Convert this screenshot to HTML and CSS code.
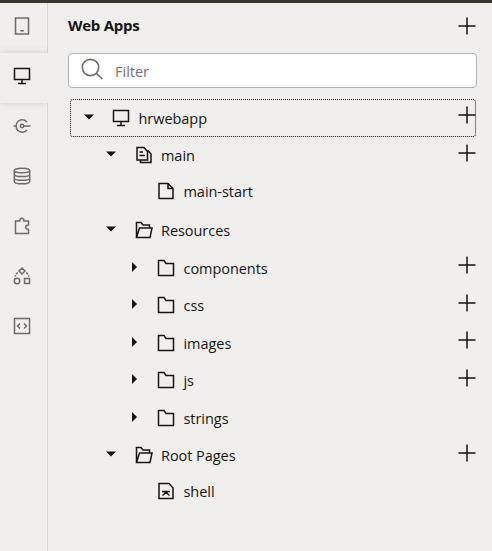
FILE: index.html
```html
<!DOCTYPE html>
<html lang="en">
<head>
<meta charset="utf-8">
<title>Web Apps</title>
<link rel="stylesheet" href="styles.css">
</head>
<body>
<svg class="defs" aria-hidden="true">
  <symbol id="monitor" viewBox="0 0 18 18"><path d="M1.5 1.5h15v11h-15zM9 12.500v4M5 16.500h8"/></symbol>
  <symbol id="folder" viewBox="0 0 18 18"><path d="M1.500 16.500v-15h5.500l2 3h7.500v12z"/></symbol>
  <symbol id="open" viewBox="0 0 18 18"><path d="M1.500 16.500v-15h4.500l2 2.500h6.500v3M1.500 16.500l3-9.500h12.500l-2 9.500z"/></symbol>
  <symbol id="page" viewBox="0 0 18 18"><path d="M2 1.500h9l5 5v10H2zM11 1.500v5h5"/></symbol>
  <symbol id="shell" viewBox="0 0 18 18"><path d="M2 1.500h10l4 4.500v10.500H2zM5 9.500h8M5.500 13.500l3.500-3 3.500 3M7 9.500l2 1.500 2-1.500"/></symbol>
  <symbol id="flow" viewBox="0 0 18 18"><path d="M2 1.500h7l3.500 4v8.500H2zM13 4.500l3 3.500v8.500H5.500V14M4.500 6h3.500M4.500 9.500h5.500"/></symbol>
  <symbol id="plus" viewBox="0 0 18 18"><path d="M9 .5v17M.5 9h17"/></symbol>
  <symbol id="down" viewBox="0 0 12 12"><path d="M1 3.500h10L6 8.500z"/></symbol>
  <symbol id="right" viewBox="0 0 12 12"><path d="M4 1v10l5-5z"/></symbol>
</svg>
<div class="topbar"></div>
<div class="app">
  <nav class="rail">
    <a class="tab"><svg viewBox="0 0 18 18"><path d="M2.500 1h13v16h-13zM7.300 13.700h3.500"/></svg></a>
    <a class="tab active"><svg><use href="#monitor"/></svg></a>
    <a class="tab"><svg viewBox="0 0 18 18"><path d="M14 5a6.200 6.200 0 1 0 0 8M.5 9H3M11 9h6.500"/><circle cx="9" cy="9" r="1.700"/></svg></a>
    <a class="tab"><svg viewBox="0 0 18 18"><ellipse cx="9" cy="3.500" rx="7.700" ry="2.300"/><path d="M1.300 3.500v11c0 3.100 15.400 3.100 15.400 0v-11M1.300 7.200c0 3.100 15.400 3.100 15.400 0M1.300 10.900c0 3.100 15.400 3.100 15.400 0"/></svg></a>
    <a class="tab"><svg viewBox="0 0 18 18"><path d="M2.500 4h4.200c-.3-3.700 4.600-3.700 4.300 0h4.500v4c-3.800-.3-3.800 4.600 0 4.300v4.200h-13z"/></svg></a>
    <a class="tab"><svg viewBox="0 0 18 18"><path d="M9 1l3 3-3 3-3-3zM11.500 11.500h5v5h-5zM4.700 5.500L3 7.200M2.500 8.200L2 9.500M13.300 5.500L15 7.200M15.500 8.200l.5 1.300"/><circle cx="4" cy="14" r="2.700"/></svg></a>
    <a class="tab"><svg viewBox="0 0 18 18"><path d="M1.500 1.500h15v15h-15zM7 6.500L4.500 9 7 11.500M11 6.500l2.500 2.500-2.500 2.500"/></svg></a>
  </nav>
  <main class="panel">
    <header class="heading"><h1>Web Apps</h1><svg class="plus"><use href="#plus"/></svg></header>
    <label class="filter"><svg viewBox="0 0 22 22"><circle cx="9.500" cy="9.500" r="8.200"/><path d="M15.300 15.300l6 5.700"/></svg><span>Filter</span></label>
    <div class="tree">
      <div class="row focused"><svg class="caret"><use href="#down"/></svg><svg class="icon"><use href="#monitor"/></svg><span>hrwebapp</span><svg class="plus"><use href="#plus"/></svg></div>
      <div class="row l1"><svg class="caret"><use href="#down"/></svg><svg class="icon"><use href="#flow"/></svg><span>main</span><svg class="plus"><use href="#plus"/></svg></div>
      <div class="row l2 leaf"><i class="caret"></i><svg class="icon"><use href="#page"/></svg><span>main-start</span></div>
      <div class="row l1"><svg class="caret"><use href="#down"/></svg><svg class="icon"><use href="#open"/></svg><span>Resources</span></div>
      <div class="row l2"><svg class="caret"><use href="#right"/></svg><svg class="icon"><use href="#folder"/></svg><span>components</span><svg class="plus"><use href="#plus"/></svg></div>
      <div class="row l2"><svg class="caret"><use href="#right"/></svg><svg class="icon"><use href="#folder"/></svg><span>css</span><svg class="plus"><use href="#plus"/></svg></div>
      <div class="row l2"><svg class="caret"><use href="#right"/></svg><svg class="icon"><use href="#folder"/></svg><span>images</span><svg class="plus"><use href="#plus"/></svg></div>
      <div class="row l2"><svg class="caret"><use href="#right"/></svg><svg class="icon"><use href="#folder"/></svg><span>js</span><svg class="plus"><use href="#plus"/></svg></div>
      <div class="row l2"><svg class="caret"><use href="#right"/></svg><svg class="icon"><use href="#folder"/></svg><span>strings</span></div>
      <div class="row l1"><svg class="caret"><use href="#down"/></svg><svg class="icon"><use href="#open"/></svg><span>Root Pages</span><svg class="plus"><use href="#plus"/></svg></div>
      <div class="row l2 leaf"><i class="caret"></i><svg class="icon"><use href="#shell"/></svg><span>shell</span></div>
    </div>
  </main>
</div>
</body>
</html>
```
FILE: styles.css
```css
* { box-sizing: border-box; }
body {
  margin: 0;
  height: 551px;
  overflow: hidden;
  background: #f0efed;
  color: #161513;
  font: 14.5px/20px "Open Sans", "Noto Sans", sans-serif;
}
svg { display: block; flex: none; width: 18px; height: 18px; fill: none; stroke: #161513; stroke-width: 1.5; }
svg.defs { display: none; }
.topbar { height: 3px; background: #3a3632; }
.app { display: flex; height: 548px; }
.rail { width: 48px; flex: none; border-right: 1px solid #d9d8d6; }
.tab { display: flex; width: 47px; height: 50px; padding: 0 3px 4px 0; align-items: center; justify-content: center; }
.tab:first-child { height: 47px; margin-bottom: 3px; padding-bottom: 1px; }
.tab svg { stroke: #6f6b66; }
.tab.active { width: 48px; padding-right: 4px; background: #f0efed; box-shadow: 0 0 8px rgba(0, 0, 0, .14); clip-path: inset(-8px 0 -8px 0); }
.tab.active svg { stroke: #161513; }
.panel { flex: 1; padding: 0 15px 0 20px; }
.heading { display: flex; height: 50px; padding: 0 1px 4px 0; align-items: center; justify-content: space-between; }
.heading h1 { margin: -2px 0 0; font-size: 15px; font-weight: 700; letter-spacing: -.25px; }
.plus { stroke-width: 1.5; }
.filter { display: flex; height: 35px; padding-left: 12px; align-items: center; gap: 12px; border: 1px solid #b5b4b2; border-radius: 4px; background: #fff; color: #77736e; }
.filter svg { width: 22px; height: 22px; stroke: #77736e; stroke-width: 1.7; margin-top: -3px; }
.filter span { margin-top: 2px; }
.tree { padding: 11px 1px 0 2px; }
.row { display: flex; height: 37.5px; padding-left: 11.5px; align-items: center; border: 1px solid transparent; letter-spacing: -.05px; }
.row.focused { border: 1px dotted #161513; border-radius: 3px; }
.row span { margin-top: 2px; }
.row .plus { margin: -5px -1px 0 auto; }
.row .caret { width: 12px; height: 12px; margin: -2px 17.5px 0 0; fill: #161513; stroke: none; }
.row .icon { margin-right: 8.5px; }
.l1 { padding-left: 34px; }
.l2 { padding-left: 56.5px; }
.leaf { padding-bottom: 4px; }
```
